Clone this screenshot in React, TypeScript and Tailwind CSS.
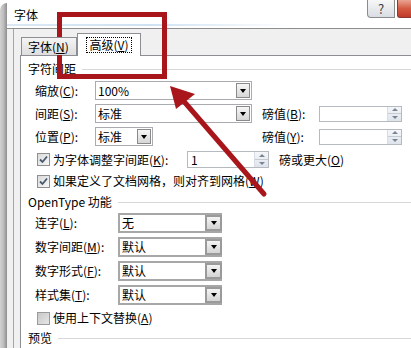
import React from "react";

/* ---------- small win7 controls ---------- */

const Key = ({ k }: { k: string }) => (
  <span>
    (<span className="underline underline-offset-1">{k}</span>)
  </span>
);

function DropBtn({ big }: { big?: boolean }) {
  return (
    <div
      className={
        big
          ? "w-[17px] h-full border-2 border-[#9a9a9a] bg-gradient-to-b from-[#f4f4f4] to-[#d4d4d4] flex items-center justify-center"
          : "w-[14px] h-[15px] my-auto mr-[1px] border border-[#8a8a8a] bg-gradient-to-b from-[#f6f6f6] to-[#d6d6d6] flex items-center justify-center"
      }
    >
      <div className="w-0 h-0 border-l-[3px] border-r-[3px] border-t-[4px] border-l-transparent border-r-transparent border-t-black" />
    </div>
  );
}

function Combo({ value, w, big }: { value: string; w: number; big?: boolean }) {
  return (
    <div
      className={
        big
          ? "h-full flex border-2 border-r-0 border-[#a7a7a7] bg-white"
          : "h-full flex border border-[#a9abb0] bg-white"
      }
      style={{ width: w }}
    >
      <div className={big ? "flex-1 pl-[2px] flex items-center" : "flex-1 pl-[2px] flex items-center"}>{value}</div>
      <DropBtn big={big} />
    </div>
  );
}

function Spinner() {
  return (
    <div className="w-[14px] h-full flex flex-col border-l border-[#d8dce4] bg-gradient-to-b from-[#f4f6f9] to-[#dfe4ec]">
      <div className="flex-1 flex items-center justify-center border-b border-[#c5cad3]">
        <div className="w-0 h-0 border-l-[3px] border-r-[3px] border-b-[3px] border-l-transparent border-r-transparent border-b-[#7a8594]" />
      </div>
      <div className="flex-1 flex items-center justify-center">
        <div className="w-0 h-0 border-l-[3px] border-r-[3px] border-t-[3px] border-l-transparent border-r-transparent border-t-[#7a8594]" />
      </div>
    </div>
  );
}

function SpinBox({ value, w, h }: { value: string; w: number; h: number }) {
  return (
    <div className="flex border border-[#b5b9c0] bg-white" style={{ width: w, height: h }}>
      <div className="flex-1 pl-[3px] flex items-center">{value}</div>
      <Spinner />
    </div>
  );
}

function Check({ on, disabled }: { on?: boolean; disabled?: boolean }) {
  return (
    <div
      className={
        disabled
          ? "w-[13px] h-[13px] border border-[#9a9a9a] bg-gradient-to-br from-[#c8c8c8] to-[#e6e6e6] shrink-0"
          : "w-[13px] h-[13px] border border-[#8f8f8f] bg-gradient-to-br from-[#dcdcdc] to-[#f6f6f6] shrink-0 flex items-center justify-center"
      }
    >
      {on && (
        <svg width="9" height="9" viewBox="0 0 9 9">
          <path d="M1 4.5 L3.5 7 L8 1.5" fill="none" stroke="#4a5a6e" strokeWidth="1.8" />
        </svg>
      )}
    </div>
  );
}

function GroupHead({ title, h }: { title: string; h: number }) {
  return (
    <div className="flex items-center pl-[7px]" style={{ height: h }}>
      <span>{title}</span>
      <div className="flex-1 h-px bg-[#d8d8d8] ml-[6px]" />
    </div>
  );
}

/* ---------- page ---------- */

export default function App() {
  return (
    <div
      className="relative w-[411px] h-[348px] overflow-hidden bg-white flex text-[12px] leading-none text-black"
      style={{ fontFamily: '"SimSun","Noto Sans CJK SC",sans-serif' }}
    >
      {/* left glass frame */}
      <div className="w-[7px] mt-[3px] rounded-tl-[7px] bg-gradient-to-r from-[#d2d2d2] via-[#bdbdbd] to-[#8e8e8e]" />

      <div className="flex-1 flex flex-col">
        {/* title bar */}
        <div className="h-[28px] flex relative">
          <div className="pl-[7px] pt-[9px]">字体</div>
          <div className="absolute left-0 bottom-[2px] w-[285px] h-[2px] bg-gradient-to-r from-[#dbe8f4] via-[#cfe2f2] to-transparent" />
          <div className="ml-auto flex items-start">
            <div className="w-[28px] h-[18px] border border-t-0 border-[#8b8b8b] rounded-bl-[4px] bg-gradient-to-b from-[#f7f7f7] to-[#d9dde3] flex items-center justify-center text-[#404040] text-[13px]">
              ?
            </div>
            <div className="w-[14px] h-[18px] ml-[2px] border-b border-l border-[#8b3a30] rounded-bl-[3px] bg-gradient-to-b from-[#e9a493] via-[#d45a40] to-[#c0392b]" />
          </div>
        </div>

        {/* client */}
        <div className="flex-1 flex bg-[#f0f0f0] border-t border-[#8e8e8e]">
          <div className="w-[6px]" />
          <div className="flex-1 flex flex-col border-l border-[#a6a6a6] pl-[6px]">
            {/* tab strip */}
            <div className="h-[26px] flex items-end pl-[1px] relative z-10">
              <div className="h-[18px] w-[56px] border border-b-0 border-[#8c8e94] bg-gradient-to-b from-[#f4f4f4] to-[#dedede] flex items-center pl-[6px]">
                字体<Key k="N" />
              </div>
              <div className="h-[23px] w-[64px] -mb-px border border-b-0 border-[#8c8e94] bg-white flex items-center justify-center">
                <span className="border border-dotted border-black px-[2px] py-[1px]">
                  高级<Key k="V" />
                </span>
              </div>
            </div>

            {/* panel */}
            <div className="flex-1 bg-white border-t border-l border-[#8c8e94] pt-[6px] flex flex-col">
              <GroupHead title="字符间距" h={14} />

              <div className="mt-[5px] h-[19px] flex items-center pl-[14px]">
                <div className="w-[60px]">缩放<Key k="C" />:</div>
                <Combo value="100%" w={157} />
              </div>

              <div className="mt-[4px] h-[19px] flex items-center pl-[14px]">
                <div className="w-[60px]">间距<Key k="S" />:</div>
                <Combo value="标准" w={157} />
                <div className="w-[57px] ml-[10px]">磅值<Key k="B" />:</div>
                <SpinBox value="" w={83} h={16} />
              </div>

              <div className="mt-[4px] h-[19px] flex items-center pl-[14px]">
                <div className="w-[60px]">位置<Key k="P" />:</div>
                <div className="w-[157px] h-full">
                  <Combo value="标准" w={58} />
                </div>
                <div className="w-[57px] ml-[10px]">磅值<Key k="Y" />:</div>
                <SpinBox value="" w={83} h={16} />
              </div>

              <div className="mt-[5px] h-[17px] flex items-center pl-[16px]">
                <Check on />
                <div className="w-[134px] ml-[3px]">为字体调整字间距<Key k="K" />:</div>
                <SpinBox value="1" w={82} h={17} />
                <div className="ml-[10px]">磅或更大<Key k="O" /></div>
              </div>

              <div className="mt-[5px] h-[16px] flex items-center pl-[16px]">
                <Check on />
                <div className="ml-[3px]">如果定义了文档网格，则对齐到网格<Key k="W" /></div>
              </div>

              <div className="mt-[6px]">
                <GroupHead title="OpenType 功能" h={14} />
              </div>

              {[
                ["连字", "L", "无"],
                ["数字间距", "M", "默认"],
                ["数字形式", "F", "默认"],
                ["样式集", "T", "默认"],
              ].map(([label, k, v]) => (
                <div key={k} className="mt-[4px] h-[20px] flex items-center pl-[14px]">
                  <div className="w-[83px]">
                    {label}
                    <Key k={k} />:
                  </div>
                  <Combo value={v} w={104} big />
                </div>
              ))}

              <div className="mt-[6px] h-[14px] flex items-center pl-[16px]">
                <Check disabled />
                <div className="ml-[3px]">使用上下文替换<Key k="A" /></div>
              </div>

              <div className="mt-[6px]">
                <GroupHead title="预览" h={14} />
              </div>
            </div>
          </div>
        </div>
      </div>

      {/* red annotation */}
      <svg className="absolute inset-0 pointer-events-none" width="411" height="348" viewBox="0 0 411 348">
        <rect x="59.5" y="14.5" width="105" height="62" fill="none" stroke="#a8161b" strokeWidth="5" />
        <line x1="264" y1="194" x2="181" y2="98" stroke="#a8161b" strokeWidth="5" strokeLinecap="round" />
        <polygon points="170,86 195,94 176,109" fill="#a8161b" />
      </svg>
    </div>
  );
}
